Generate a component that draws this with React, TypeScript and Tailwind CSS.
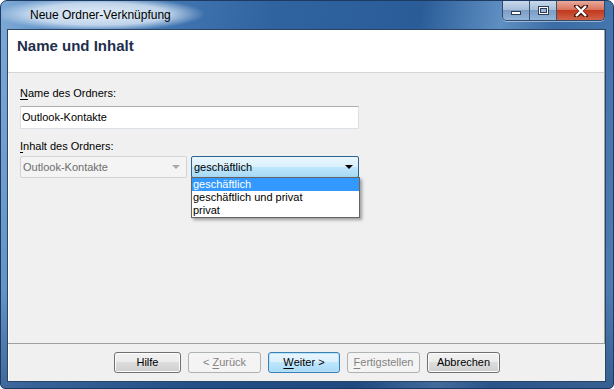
import React from "react";

const ui = "font-['Liberation_Sans',Arial,sans-serif]";

function Key({ k, rest }: { k: string; rest: string }) {
  return (
    <>
      <span className="underline underline-offset-[2px]">{k}</span>
      {rest}
    </>
  );
}

function CaptionButtons() {
  return (
    <div className="flex h-[20px] overflow-hidden rounded-b-[5px] border border-t-0 border-[#2f4a6c] shadow-[0_1px_0_rgba(255,255,255,0.45)]">
      <div className="flex w-[27px] items-center justify-center border-r border-[#3b5575] bg-[linear-gradient(#c9d9ea_0%,#a7bfdb_45%,#7d9dc4_50%,#93b5da_100%)]">
        <div className="mt-[5px] h-[4px] w-[10px] border border-[#2c3e55] bg-white" />
      </div>
      <div className="flex w-[27px] items-center justify-center border-r border-[#3b5575] bg-[linear-gradient(#c9d9ea_0%,#a7bfdb_45%,#7d9dc4_50%,#93b5da_100%)]">
        <div className="h-[9px] w-[11px] border border-[#2c3e55] bg-white p-[1px]">
          <div className="h-full w-full border border-[#2c3e55] bg-[#9bb6d6]" />
        </div>
      </div>
      <div className="flex w-[47px] items-center justify-center bg-[linear-gradient(#e9a99b_0%,#d8755f_45%,#c2391c_50%,#d0634a_100%)]">
        <svg width="14" height="12" viewBox="0 0 14 12">
          <path d="M2 1 L7 5 L12 1 M2 11 L7 7 L12 11" stroke="#4a1a10" strokeWidth="4.2" fill="none" strokeLinecap="square" />
          <path d="M2 1 L12 11 M12 1 L2 11" stroke="#ffffff" strokeWidth="2.4" fill="none" />
        </svg>
      </div>
    </div>
  );
}

function Button({
  children,
  w,
  variant = "normal",
}: {
  children: React.ReactNode;
  w: string;
  variant?: "normal" | "default" | "disabled";
}) {
  const look =
    variant === "default"
      ? "border-[#3c7fb1] bg-[linear-gradient(#eaf6fd_0%,#d9f0fc_48%,#bee6fd_50%,#a7d9f5_100%)] text-black shadow-[inset_0_0_0_1px_#b6e3fb]"
      : variant === "disabled"
      ? "border-[#adb2b5] bg-[#f4f4f4] text-[#838383]"
      : "border-[#707070] bg-[linear-gradient(#f2f2f2_0%,#ebebeb_48%,#dddddd_50%,#cfcfcf_100%)] text-black shadow-[inset_0_0_0_1px_#fcfcfc]";
  return (
    <div className={`${w} flex h-[21px] items-center justify-center rounded-[3px] border text-[11px] ${look}`}>
      {children}
    </div>
  );
}

export default function App() {
  return (
    <div
      className={`${ui} relative flex h-[389px] w-[614px] flex-col overflow-hidden rounded-t-[7px] rounded-b-[5px] border border-[#1d3a63] bg-[linear-gradient(180deg,rgba(0,0,0,0)_75%,rgba(10,35,80,0.35)_100%),linear-gradient(100deg,#7eaad6_0%,#4f83bd_14%,#2f64a1_40%,#2a5c98_62%,#5f8fc2_74%,#3b6ca5_82%,#4f7fb4_100%)]`}
    >
      {/* title bar */}
      <div className="flex h-[28px] shrink-0 items-start">
        <div className="-ml-[6px] -mt-[4px] flex h-[34px] items-center rounded-full bg-[radial-gradient(closest-side,rgba(235,243,250,0.95),rgba(220,233,246,0.8)_65%,rgba(220,233,246,0))] pl-[35px] pr-[34px] pt-[2px] text-[12px] text-black">
          Neue Ordner-Verknüpfung
        </div>
        <div className="ml-auto mr-[8px]">
          <CaptionButtons />
        </div>
      </div>

      {/* client */}
      <div className="mb-[6px] ml-[6px] mr-[7px] flex flex-1 flex-col border border-[#2a4466] bg-[#f0f0f0]">
        <div className="flex flex-1 flex-col border-r border-b border-[#a0a0a0] border-l-white">
          <div className="h-[43px] shrink-0 border-b border-[#d5d5d5] bg-white pl-[9px] pt-[7px] text-[15px] font-bold leading-[18px] text-[#1e2f4c]">
            Name und Inhalt
          </div>
          <div className="relative flex-1 border-l border-white pl-[11px] pt-[14px] text-[11px] leading-[13px] text-black">
            <div>
              <Key k="N" rest="ame des Ordners:" />
            </div>
            <div className="mt-[6px] flex h-[23px] w-[339px] items-center border border-[#dbdfe6] border-t-[#abadb3] bg-white pl-[1px]">
              Outlook-Kontakte
            </div>
            <div className="mt-[11px]">
              <Key k="I" rest="nhalt des Ordners:" />
            </div>
            <div className="mt-[3px] flex gap-[4px]">
              <div className="flex h-[22px] w-[167px] items-center justify-between rounded-[2px] border border-[#d3d3d3] bg-[#f4f4f4] pl-[2px] pr-[6px] text-[#6d6d6d]">
                <span>Outlook-Kontakte</span>
                <svg width="8" height="4" viewBox="0 0 8 4">
                  <path d="M0 0 H8 L4 4 Z" fill="#a8a8a8" />
                </svg>
              </div>
              <div className="relative">
                <div className="flex h-[22px] w-[168px] items-center justify-between rounded-[2px] border border-[#2c628b] bg-[linear-gradient(#eaf6fd_0%,#d9f0fc_48%,#bee6fd_52%,#a7d9f5_100%)] pl-[2px] pr-[5px]">
                  <span>geschäftlich</span>
                  <svg width="8" height="4" viewBox="0 0 8 4">
                    <path d="M0 0 H8 L4 4 Z" fill="#000" />
                  </svg>
                </div>
                <div className="absolute left-0 top-[21px] z-10 w-[169px] border border-[#646464] bg-white shadow-[2px_2px_3px_rgba(0,0,0,0.35)]">
                  <div className="h-[13px] bg-[#3399ff] pl-[1px] text-white">geschäftlich</div>
                  <div className="h-[13px] pl-[1px]">geschäftlich und privat</div>
                  <div className="h-[13px] pl-[1px]">privat</div>
                </div>
              </div>
            </div>
          </div>
        </div>
        <div className="flex h-[37px] shrink-0 items-center justify-center gap-[7px] border-l border-white">
          <Button w="w-[67px]">Hilfe</Button>
          <Button w="w-[73px]" variant="disabled">
            &lt;&nbsp;<Key k="Z" rest="urück" />
          </Button>
          <Button w="w-[72px]" variant="default">
            <Key k="W" rest="eiter &gt;" />
          </Button>
          <Button w="w-[73px]" variant="disabled">
            <Key k="F" rest="ertigstellen" />
          </Button>
          <Button w="w-[73px]">Abbrechen</Button>
        </div>
      </div>
    </div>
  );
}
